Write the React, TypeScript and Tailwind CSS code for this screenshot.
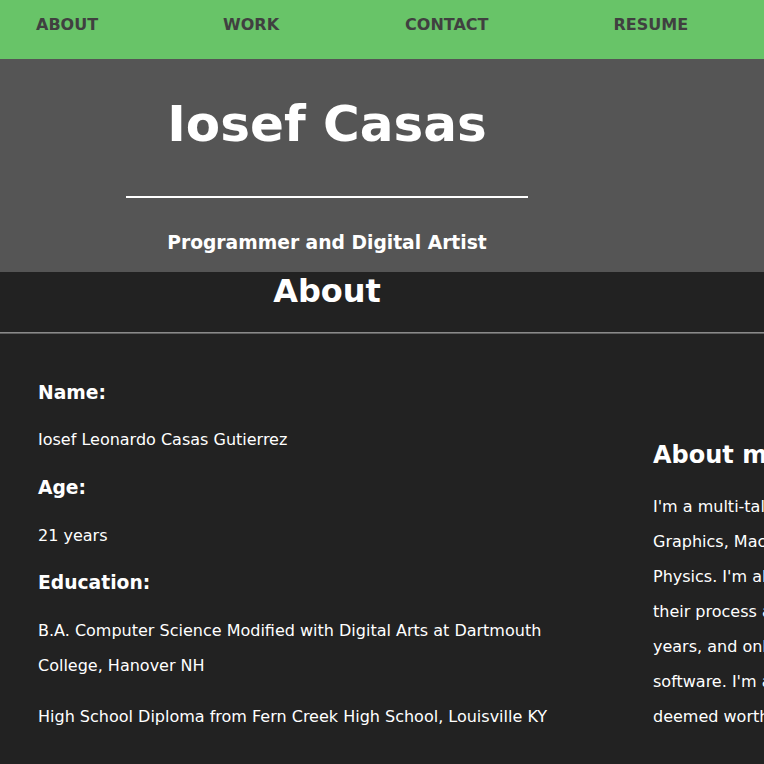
import React from "react";

const font = { fontFamily: '"DejaVu Sans", Verdana, sans-serif' };

export default function App() {
  const aboutLines = [
    "I'm a multi-talented programmer and artist with experience in Computer",
    "Graphics, Machine Learning, Web Development, and Computational",
    "Physics. I'm always looking to learn from other creators and to share",
    "their process and my own. I've been making art for over ten",
    "years, and only recently began developing my own creative",
    "software. I'm always looking for new projects that would be",
    "deemed worthy of my time.",
  ];
  return (
    <div className="w-[764px] min-h-screen overflow-hidden bg-[#222222] text-white" style={font}>
      <nav className="h-[59px] bg-[#68c468] flex items-start pt-[15px] pl-[36px] gap-[125px] text-[16px] leading-[19px] font-bold text-[#404040] whitespace-nowrap">
        <span>ABOUT</span>
        <span>WORK</span>
        <span className="ml-[1px]">CONTACT</span>
        <span>RESUME</span>
      </nav>
      <header className="h-[213px] bg-[#555555]">
        <div className="w-[654px] flex flex-col items-center">
          <h1 className="mt-[36px] text-[50px] leading-[58px] font-bold whitespace-nowrap">Iosef Casas</h1>
          <div className="mt-[43px] w-[402px] h-[2px] bg-white" />
          <h3 className="mt-[34px] text-[18.72px] leading-[22px] font-bold whitespace-nowrap">Programmer and Digital Artist</h3>
        </div>
      </header>
      <div className="w-[654px] h-[60px] text-center pt-[1px]">
        <h2 className="text-[32px] leading-[37px] font-bold">About</h2>
      </div>
      <div className="w-full">
        <div className="h-px bg-[#8a8a8a]" />
        <div className="h-px bg-[#5e5e5e]" />
      </div>
      <div className="flex w-[1230px]">
        <div className="w-[615px] shrink-0 px-[38px] pt-[48px] text-[16px]">
          <h3 className="text-[18.72px] leading-[22px] font-bold">Name:</h3>
          <p className="mt-[17.5px] leading-[35px]">Iosef Leonardo Casas Gutierrez</p>
          <h3 className="mt-[20.5px] text-[18.72px] leading-[22px] font-bold">Age:</h3>
          <p className="mt-[19px] leading-[35px]">21 years</p>
          <h3 className="mt-[19px] text-[18.72px] leading-[22px] font-bold">Education:</h3>
          <p className="mt-[19px] leading-[35px]">
            B.A. Computer Science Modified with Digital Arts at Dartmouth College, Hanover NH
          </p>
          <p className="mt-[16px] leading-[35px]">
            High School Diploma from Fern Creek High School, Louisville KY
          </p>
        </div>
        <div className="w-[615px] shrink-0 pl-[38px] pt-[106.7px] text-[16px]">
          <h2 className="text-[24px] leading-[28px] font-bold whitespace-nowrap">About me</h2>
          <p className="mt-[20px] leading-[35px] whitespace-nowrap">
            {aboutLines.map((l, i) => (
              <span key={i} className="block">
                {l}
              </span>
            ))}
          </p>
        </div>
      </div>
    </div>
  );
}
